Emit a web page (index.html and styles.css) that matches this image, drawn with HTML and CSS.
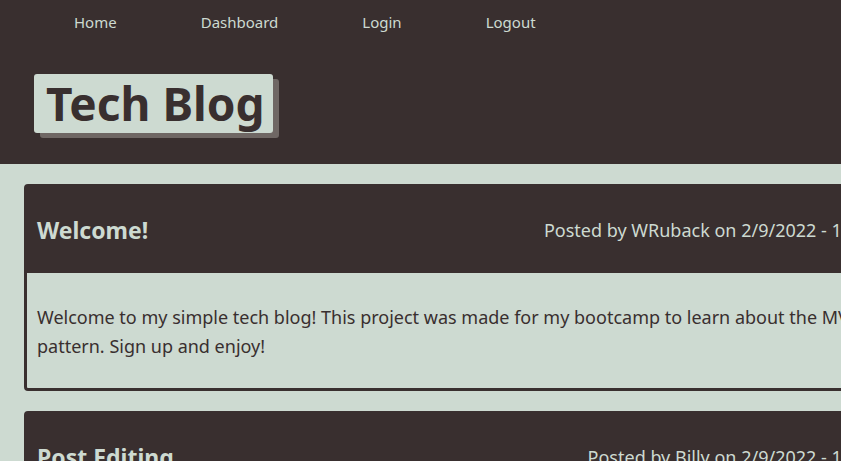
FILE: index.html
```html
<!DOCTYPE html>
<html lang="en">
<head>
<meta charset="utf-8">
<title>Tech Blog</title>
<link rel="stylesheet" href="styles.css">
</head>
<body>
<header class="site-header">
  <nav class="nav">
    <a class="nav-link" href="#">Home</a>
    <a class="nav-link" href="#">Dashboard</a>
    <a class="nav-link" href="#">Login</a>
    <a class="nav-link" href="#">Logout</a>
  </nav>
  <h1 class="brand">Tech Blog</h1>
</header>
<main class="main">
  <article class="card">
    <div class="card-head">
      <h2 class="card-title">Welcome!</h2>
      <span class="card-meta">Posted by WRuback on 2/9/2022 - 10:15 AM</span>
    </div>
    <div class="card-body">
      <p class="card-text">Welcome to my simple tech blog! This project was made for my bootcamp to learn about the MVC pattern. Sign up and enjoy!</p>
    </div>
  </article>
  <article class="card">
    <div class="card-head">
      <h2 class="card-title">Post Editing</h2>
      <span class="card-meta">Posted by Billy on 2/9/2022 - 10:20 AM</span>
    </div>
    <div class="card-body">
      <p class="card-text">You can edit your posts from the dashboard.</p>
    </div>
  </article>
</main>
</body>
</html>
```
FILE: styles.css
```css
html, body {
  margin: 0;
  padding: 0;
  overflow: hidden;
}
body {
  font-family: "Noto Sans", "Open Sans", sans-serif;
  background: #cddad1;
  color: #392f2f;
}
.site-header {
  background: #392f2f;
  height: 164px;
  padding: 0 34px;
  box-sizing: border-box;
}
.nav {
  display: flex;
  padding-top: 12px;
  padding-left: 40px;
}
.nav-link {
  color: #cddad1;
  text-decoration: none;
  font-size: 15px;
  line-height: 20px;
  margin-right: 84px;
}
.brand {
  display: inline-block;
  margin: 42px 0 0;
  padding: 0 8px 0 12px;
  background: #cddad1;
  color: #392f2f;
  font-size: 46px;
  line-height: 59px;
  font-weight: 700;
  border-radius: 3px;
  box-shadow: 6px 5px 0 #6f6764;
}
.main {
  padding: 20px 0 0 24px;
}
.card {
  width: 899px;
  box-sizing: border-box;
  border: 3px solid #392f2f;
  border-radius: 4px;
  margin-bottom: 20px;
}
.card-head {
  background: #392f2f;
  height: 86px;
  display: flex;
  align-items: center;
  justify-content: space-between;
  padding: 0 10px;
  color: #cddad1;
}
.card-title {
  margin: 0;
  font-size: 23px;
  font-weight: 700;
}
.card-meta {
  font-size: 18px;
}
.card-body {
  padding: 30px 10px 27px;
}
.card-text {
  margin: 0;
  font-size: 18px;
  line-height: 29px;
}
```
